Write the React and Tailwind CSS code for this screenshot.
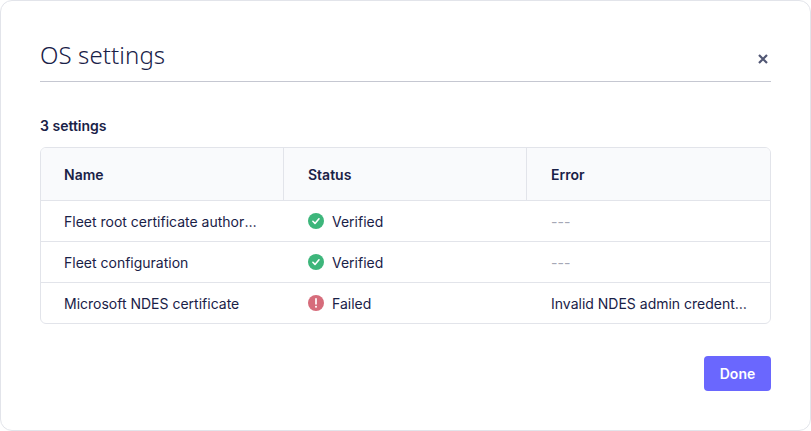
const rows = [
  { name: 'Fleet root certificate authority (CA)', status: 'Verified', error: '---' },
  { name: 'Fleet configuration', status: 'Verified', error: '---' },
  { name: 'Microsoft NDES certificate', status: 'Failed', error: 'Invalid NDES admin credentials' },
]

function StatusIcon({ status }) {
  if (status === 'Verified') {
    return (
      <svg width="16" height="16" viewBox="0 0 16 16" className="shrink-0">
        <circle cx="8" cy="8" r="8" fill="#3db67b" />
        <path d="M4.9 8.3l2.1 2.1 4-4.6" fill="none" stroke="#fff" strokeWidth="1.6" strokeLinecap="round" strokeLinejoin="round" />
      </svg>
    )
  }
  return (
    <svg width="16" height="16" viewBox="0 0 16 16" className="shrink-0">
      <circle cx="8" cy="8" r="8" fill="#d66c7b" />
      <path d="M8 3.8v5" fill="none" stroke="#fff" strokeWidth="1.7" strokeLinecap="round" />
      <circle cx="8" cy="11.7" r="1" fill="#fff" />
    </svg>
  )
}

export default function App() {
  return (
    <div className="w-[811px] h-[431px] bg-white border border-[#e2e4ea] rounded-[12px] px-[39px] font-['Inter',sans-serif] text-[#192147] overflow-hidden">

      {/* Header */}
      <div className="flex items-start justify-between h-[81px] border-b border-[#c5c7d1] pt-[38px]">
        <h1 className="font-['Noto_Sans',sans-serif] text-[24px] leading-[32px] font-light tracking-[0.1px]">OS settings</h1>
        <button className="mt-[15px] mr-[3px] text-[#515774]">
          <svg width="10" height="10" viewBox="0 0 10 10" className="block">
            <path d="M1 1l8 8M9 1l-8 8" fill="none" stroke="currentColor" strokeWidth="2.2" />
          </svg>
        </button>
      </div>

      <p className="mt-[35px] text-[14px] leading-[18px] font-semibold">3 settings</p>

      {/* Table */}
      <div className="mt-[12px] border border-[#e2e4ea] rounded-[6px] overflow-hidden">
        <div className="grid grid-cols-[243px_243px_1fr] h-[53px] bg-[#f9fafc] border-b border-[#e2e4ea] text-[14px] font-semibold">
          <div className="flex items-center pl-[23px] border-r border-[#e2e4ea]">Name</div>
          <div className="flex items-center pl-[24px] border-r border-[#e2e4ea]">Status</div>
          <div className="flex items-center pl-[24px]">Error</div>
        </div>
        {rows.map((row, i) => (
          <div key={row.name} className={`grid grid-cols-[243px_243px_1fr] text-[14px] ${i < rows.length - 1 ? 'h-[41px] border-b border-[#e2e4ea]' : 'h-[40px]'}`}>
            <div className="flex items-center pl-[23px] pr-[25px] min-w-0">
              <span className="truncate">{row.name}</span>
            </div>
            <div className="flex items-center gap-[8px] pl-[24px]">
              <StatusIcon status={row.status} />
              <span>{row.status}</span>
            </div>
            <div className="flex items-center pl-[24px] pr-[20px] min-w-0">
              <span className={`truncate ${row.error === '---' ? 'text-[#a5a8b6]' : ''}`}>{row.error}</span>
            </div>
          </div>
        ))}
      </div>

      <div className="flex justify-end mt-[32px]">
        <button className="w-[67px] h-[35px] rounded-[4px] bg-[#6a67fe] text-white text-[14px] font-semibold">Done</button>
      </div>

    </div>
  )
}
